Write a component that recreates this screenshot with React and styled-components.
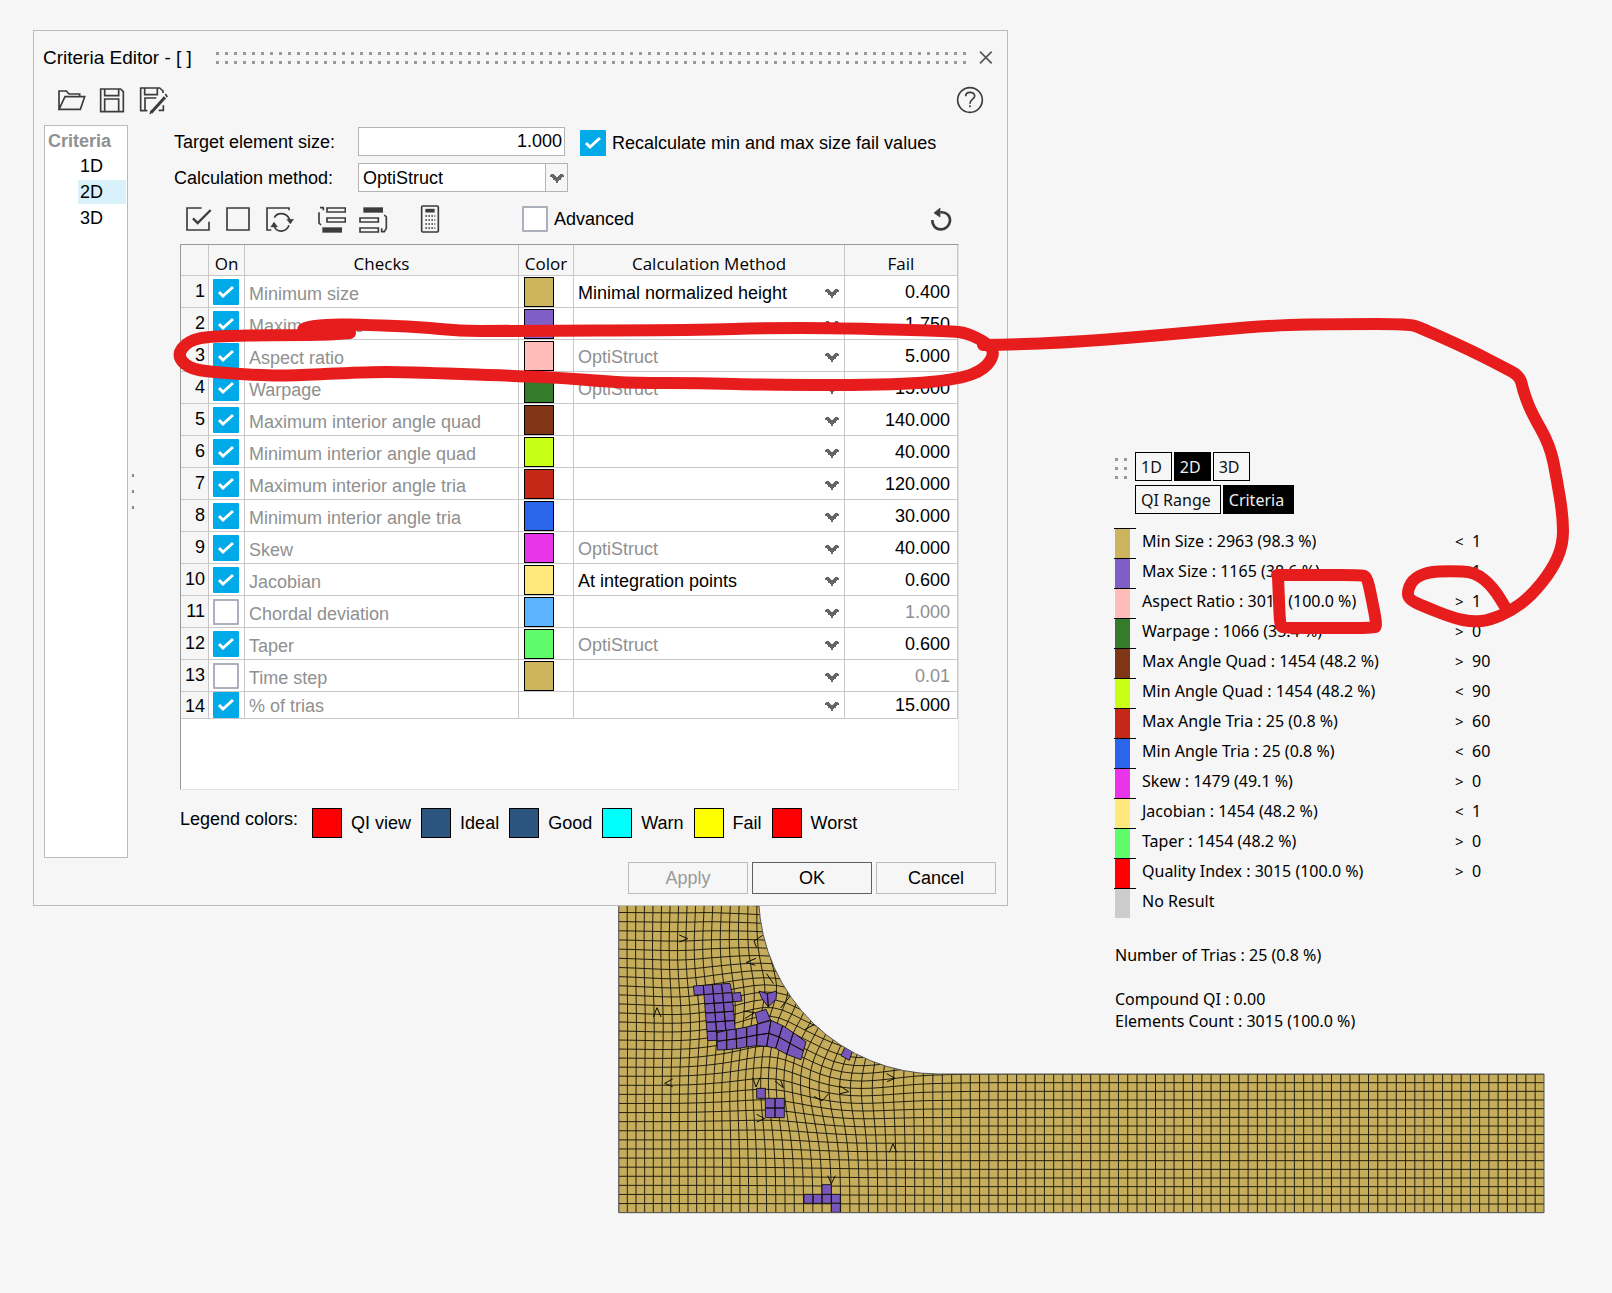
import React, { useState } from 'react';
import styled, { createGlobalStyle } from 'styled-components';

const checks = [
  { name: 'Minimum size', color: '#cdb55e', method: 'Minimal normalized height', fail: '0.400', on: true, editable: true },
  { name: 'Maximum size', color: '#7f5fc7', method: '', fail: '1.750', on: true },
  { name: 'Aspect ratio', color: '#ffbcb8', method: 'OptiStruct', fail: '5.000', on: true },
  { name: 'Warpage', color: '#347c2c', method: 'OptiStruct', fail: '15.000', on: true },
  { name: 'Maximum interior angle quad', color: '#803517', method: '', fail: '140.000', on: true },
  { name: 'Minimum interior angle quad', color: '#c8ff17', method: '', fail: '40.000', on: true },
  { name: 'Maximum interior angle tria', color: '#c62817', method: '', fail: '120.000', on: true },
  { name: 'Minimum interior angle tria', color: '#2b65ec', method: '', fail: '30.000', on: true },
  { name: 'Skew', color: '#e935e9', method: 'OptiStruct', fail: '40.000', on: true },
  { name: 'Jacobian', color: '#ffe87c', method: 'At integration points', fail: '0.600', on: true, editable: true },
  { name: 'Chordal deviation', color: '#5cb3ff', method: '', fail: '1.000', on: false },
  { name: 'Taper', color: '#5ffb6b', method: 'OptiStruct', fail: '0.600', on: true },
  { name: 'Time step', color: '#cdb55e', method: '', fail: '0.01', on: false },
  { name: '% of trias', color: null, method: '', fail: '15.000', on: true },
];

const legendColors = [
  ['QI view', '#ff0000'],
  ['Ideal', '#2b547e'],
  ['Good', '#2b547e'],
  ['Warn', '#00ffff'],
  ['Fail', '#ffff00'],
  ['Worst', '#ff0000'],
];

const results = [
  ['Min Size : 2963 (98.3 %)', '#cdb55e', '<', '1'],
  ['Max Size : 1165 (38.6 %)', '#7f5fc7', '>', '1'],
  ['Aspect Ratio : 3015 (100.0 %)', '#ffbcb8', '>', '1'],
  ['Warpage : 1066 (35.4 %)', '#347c2c', '>', '0'],
  ['Max Angle Quad : 1454 (48.2 %)', '#803517', '>', '90'],
  ['Min Angle Quad : 1454 (48.2 %)', '#c8ff17', '<', '90'],
  ['Max Angle Tria : 25 (0.8 %)', '#c62817', '>', '60'],
  ['Min Angle Tria : 25 (0.8 %)', '#2b65ec', '<', '60'],
  ['Skew : 1479 (49.1 %)', '#e935e9', '>', '0'],
  ['Jacobian : 1454 (48.2 %)', '#ffe87c', '<', '1'],
  ['Taper : 1454 (48.2 %)', '#5ffb6b', '>', '0'],
  ['Quality Index : 3015 (100.0 %)', '#ff0000', '>', '0'],
  ['No Result', '#cccccc', '', ''],
];

/* ---------- icons ---------- */

const Icon = ({ box, children }) => {
  const [, , w, h] = box.split(' ').map(Number);
  return (
    <svg width={w / 3} height={h / 3} viewBox={box} fill="none" stroke="#3c3c3c" strokeWidth="5" aria-hidden="true">
      {children}
    </svg>
  );
};

const OpenIcon = () => (
  <Icon box="81 186 90 78">
    <path d="M87 253V198h22l8 9h32v9M87 253l18-38h59l-13 38z" />
  </Icon>
);

const SaveIcon = () => (
  <Icon box="207 186 84 78">
    <path d="M212 192h60l8 8v60h-68zM224 192v20h42v-20M224 260v-38h42v38" />
  </Icon>
);

const SaveAsIcon = () => (
  <Icon box="327 186 90 87">
    <path d="M352 260h-20v-68h57l10 9v6M344 192v20h38v-20M345 260v-38h34" />
    <path d="M363 266l42-46" strokeWidth="9" />
    <path d="M360 270l6-12M406 210l6 9M400 244v15h-14" />
  </Icon>
);

const HelpIcon = () => (
  <Icon box="1308 180 84 84">
    <circle cx="1350" cy="222" r="37" />
    <path d="M1337 211c0-8 6-12 13-12s14 4 14 11c0 10-14 9-14 23" />
    <path d="M1350 238v6" />
  </Icon>
);

const CloseIcon = () => (
  <Icon box="1374 72 48 48">
    <path d="M1380 77l35 35M1415 77l-35 35" stroke="#555" strokeWidth="5" />
  </Icon>
);

const CheckAllIcon = () => (
  <Icon box="465 540 84 84">
    <path d="M515 549h-44v66h66v-25" />
    <path d="M489 580l14 14 39-39" strokeWidth="7" />
  </Icon>
);

const CheckNoneIcon = () => (
  <Icon box="585 540 84 84">
    <path d="M591 549h66v66h-66z" />
  </Icon>
);

const InvertIcon = () => (
  <Icon box="705 540 90 87">
    <path d="M724 615h-13v-66h66v7" />
    <path d="M733 578c8-16 36-18 46 6M777 601c-8 22-36 24-45 2" />
    <path d="M770 583h21l-10 14zM722 606l10-15 11 15z" fill="#3c3c3c" strokeWidth="1" />
  </Icon>
);

const MoveDownIcon = () => (
  <Icon box="861 540 87 87">
    <path d="M891 549h55v12h-55zM891 579h55v12h-55z" />
    <path d="M877 607h59v16h-59z" fill="#3c3c3c" stroke="none" />
    <path d="M882 548h-12M880 548v8M867 562v32l6 6" />
  </Icon>
);

const MoveUpIcon = () => (
  <Icon box="981 540 90 87">
    <path d="M997 547h59v16h-59z" fill="#3c3c3c" stroke="none" />
    <path d="M987 579h55v12h-55zM987 609h55v12h-55z" />
    <path d="M1060 570l6 6v34l-6 10h-9M1052 610v12" />
  </Icon>
);

const CalculatorIcon = () => (
  <Icon box="1167 537 60 90">
    <rect x="1172" y="543" width="50" height="78" rx="3" />
    <path d="M1183 557h28" strokeWidth="11" />
    <path d="M1183 573h30M1183 585h30M1183 597h30M1183 609h30" strokeWidth="4" strokeDasharray="5 4" />
  </Icon>
);

const ResetIcon = () => (
  <Icon box="1227 543 72 78">
    <path d="M1261 562c20-2 30 12 29 26-2 14-13 26-28 25-15 0-26-13-25-28" strokeWidth="8" />
    <path d="M1242 564l18-15v27z" fill="#3c3c3c" strokeWidth="2" />
  </Icon>
);

const Arrow = () => (
  <svg width="14" height="10" viewBox="0 0 14 10" aria-hidden="true">
    <path d="M1 1h3v1h1v1h1v1h2V3h1V2h1V1h3v1h1v2h-2v1h-1v2h-2v1H8v2H6V8H5V7H3V5H2V4H0V2h1z" fill="#666" />
  </svg>
);

const Check = ({ label, ...props }) => (
  <CheckWrap>
    <input type="checkbox" aria-label={label} {...props} />
    <svg width="26" height="26" viewBox="0 0 26 26" aria-hidden="true">
      <path d="M6 13l4 4 10-9" fill="none" stroke="#fff" strokeWidth="3" />
    </svg>
  </CheckWrap>
);

/* ---------- finite element mesh, three units to a pixel ---------- */

// rotates the grid round a point, less and less with the distance
const swirl = ([x, y], cx, cy, degrees, radius) => {
  const dx = x - cx;
  const dy = y - cy;
  const d = (dx * dx + dy * dy) / (radius * radius);
  const a = ((degrees * Math.PI) / 180) * Math.exp(-d);
  return [cx + dx * Math.cos(a) - dy * Math.sin(a), cy + dx * Math.sin(a) + dy * Math.cos(a)];
};

const meshPoint = (col, row) => {
  const x = col <= 16 ? 26 + col * 26 : 442 + (col - 16) * 27.78;
  const w = Math.min(1, Math.max(0, (1000 - x) / 700));
  const y = 935 - row * (26 + w * 1.3);
  let p = swirl([x, y], 620, 420, 27, 190);
  p = swirl(p, 320, 260, -7, 170);
  return swirl(p, 540, 320, 12, 100);
};

const linePath = (points) => 'M' + points.map((p) => p.map((n) => n.toFixed(1)).join(' ')).join('L');

const buildMesh = () => {
  const lines = [];
  for (let row = 0; row <= 36; row++) {
    const points = [];
    for (let col = 0; col <= 101; col++) points.push(meshPoint(col, row));
    lines.push(linePath(points));
  }
  for (let col = 0; col <= 101; col++) {
    const points = [];
    for (let row = 0; row <= 36; row++) points.push(meshPoint(col, row));
    lines.push(linePath(points));
  }
  return lines.join('');
};

const meshLines = buildMesh();
const meshOutline = 'M26 0H446A540 540 0 0 0 984 519H2802V935H26Z';

const trias =
  'M208 102l25 11-25 10M458 103l-26 17 8 20M438 172l-29 12 27 9M470 218l20 30M130 348l11-28 12 28M188 534l-24 13 24 10M428 530l10 28 12-28M495 540l25 20-8-22M440 640l24 13-24 10M653 824l11 24 12-24M838 754l11-26 11 26M830 518l25 14-24 10M690 555l26 17-26 6M612 586l24 14 20-22M542 283l-30 38M614 370l-30 16M400 330l34 5-30 18';

// strips of failed elements: corner points along the top and the bottom edge
const failed = [
  { top: [[250, 255], [280, 253], [307, 251], [334, 249], [360, 247]], bottom: [[253, 282], [282, 281], [310, 279], [338, 277], [366, 275]], rows: 1 },
  { top: [[282, 281], [310, 279], [338, 277], [366, 275]], bottom: [[293, 419], [322, 418], [350, 416], [378, 414]], rows: 5 },
  { top: [[366, 277], [391, 274]], bottom: [[370, 302], [396, 300]], rows: 1 },
  {
    top: [[321, 395], [350, 388], [378, 384], [410, 378], [441, 370], [483, 358], [518, 374], [550, 395], [588, 423]],
    bottom: [[322, 447], [350, 446], [380, 443], [410, 438], [440, 434], [470, 436], [497, 442], [530, 460], [573, 476]],
    rows: 2,
  },
  { top: [[447, 270], [472, 278], [500, 270]], bottom: [[455, 292], [475, 318], [498, 295]], rows: 1 },
  { top: [[436, 335], [468, 325]], bottom: [[443, 368], [482, 357]], rows: 1 },
  { top: [[705, 438], [727, 452]], bottom: [[693, 464], [718, 478]], rows: 1 },
  { top: [[440, 562], [466, 562]], bottom: [[440, 592], [466, 592]], rows: 1 },
  { top: [[466, 592], [495, 592], [523, 592]], bottom: [[466, 650], [495, 650], [523, 650]], rows: 2 },
  { top: [[582, 880], [609, 880], [636, 880], [664, 880], [691, 880]], bottom: [[582, 907], [609, 907], [636, 907], [664, 907], [691, 907]], rows: 1 },
  { top: [[636, 851], [664, 851]], bottom: [[636, 880], [664, 880]], rows: 1 },
  { top: [[664, 907], [691, 907]], bottom: [[664, 934], [691, 934]], rows: 1 },
];

const mix = (a, b, t) => [a[0] + (b[0] - a[0]) * t, a[1] + (b[1] - a[1]) * t];

const stripPath = ({ top, bottom, rows }) => {
  const cells = [];
  for (let i = 0; i < top.length - 1; i++) {
    for (let j = 0; j < rows; j++) {
      cells.push(
        linePath([
          mix(top[i], bottom[i], j / rows),
          mix(top[i + 1], bottom[i + 1], j / rows),
          mix(top[i + 1], bottom[i + 1], (j + 1) / rows),
          mix(top[i], bottom[i], (j + 1) / rows),
        ]) + 'Z'
      );
    }
  }
  return cells.join('');
};

const Mesh = () => (
  <MeshSvg viewBox="24 15 2781 924" role="img" aria-label="Mesh">
    <defs>
      <clipPath id="part">
        <path d={meshOutline} />
      </clipPath>
    </defs>
    <g clipPath="url(#part)" stroke="#0c0a04" strokeWidth="2.6">
      <path d={meshOutline} fill="#c5ad5b" stroke="none" />
      <path d={meshLines} fill="none" />
      <path d={trias} fill="none" strokeWidth="3" />
      {failed.map((strip, i) => (
        <path key={i} d={stripPath(strip)} fill="#7857bd" />
      ))}
    </g>
    <path d={meshOutline} fill="none" stroke="#555" strokeWidth="3" />
  </MeshSvg>
);

/* ---------- red pen ---------- */

const strokes = [
  [[350, 333], [330, 335], [287, 335], [210, 336], [188, 341], [177, 355], [188, 368], [210, 372], [270, 376], [303, 375], [370, 372], [403, 372], [520, 376], [563, 378], [600, 381], [633, 383], [700, 383], [770, 385], [900, 385], [960, 379], [985, 369], [995, 353], [987, 343], [967, 333], [950, 331], [833, 328], [767, 328], [700, 330], [500, 331], [460, 331], [420, 327], [370, 325], [327, 324], [303, 328], [303, 332], [348, 330]],
  [[983, 345], [1050, 344], [1164, 335], [1270, 325], [1344, 324], [1409, 324], [1421, 328], [1470, 350], [1503, 367], [1520, 376], [1523, 390], [1531, 412], [1550, 445], [1557, 480], [1563, 517], [1563, 545], [1552, 570], [1531, 596], [1511, 611], [1490, 620], [1473, 622], [1453, 618], [1423, 606], [1410, 600], [1407, 593], [1412, 580], [1427, 572], [1450, 571], [1475, 572], [1493, 587], [1507, 610]],
  [[1277, 575], [1320, 575], [1362, 575], [1367, 577], [1371, 595], [1377, 626], [1374, 628], [1330, 628], [1284, 628], [1280, 626], [1279, 600], [1278, 577]],
];

const penPath = (points) => {
  let d = `M${points[0]}`;
  for (let i = 1; i < points.length - 1; i++) {
    d += `Q${points[i]} ${mix(points[i], points[i + 1], 0.5)}`;
  }
  return `${d}L${points[points.length - 1]}`;
};

const PenMarks = () => (
  <PenSvg viewBox="0 0 1612 1293" aria-hidden="true">
    {strokes.map((points, i) => (
      <path key={i} d={penPath(points)} />
    ))}
  </PenSvg>
);

/* ---------- page ---------- */

const CriteriaTable = () => {
  const [rows, setRows] = useState(checks);

  const toggle = (index) => {
    setRows(rows.map((row, i) => (i === index ? { ...row, on: !row.on } : row)));
  };

  return (
    <TableBox>
      <Table>
        <colgroup>
          <col className="number" />
          <col className="on" />
          <col />
          <col className="color" />
          <col className="method" />
          <col className="fail" />
        </colgroup>
        <thead>
          <tr>
            <th aria-label="Row" />
            <th>On</th>
            <th>Checks</th>
            <th>Color</th>
            <th>Calculation Method</th>
            <th>Fail</th>
          </tr>
        </thead>
        <tbody>
          {rows.map((row, i) => (
            <Row key={row.name} $short={!row.color}>
              <td className="number">{i + 1}</td>
              <td className="on">
                <Check label={row.name} checked={row.on} onChange={() => toggle(i)} />
              </td>
              <td className="name">{row.name}</td>
              <td className="color">{row.color && <Swatch $color={row.color} />}</td>
              <td className="field">
                <CellSelect $muted={!row.editable}>
                  <select aria-label={`${row.name} method`} defaultValue={row.method}>
                    <option>{row.method}</option>
                  </select>
                  <Arrow />
                </CellSelect>
              </td>
              <td className="field">
                <FailInput aria-label={`${row.name} fail`} defaultValue={row.fail} $muted={!row.on} />
              </td>
            </Row>
          ))}
        </tbody>
      </Table>
    </TableBox>
  );
};

const CriteriaEditor = () => (
  <Dialog aria-labelledby="dialog-title">
    <TitleBar>
      <h1 id="dialog-title">Criteria Editor - [ ]</h1>
      <Grip>
        <i />
        <i />
      </Grip>
      <IconButton aria-label="Close"><CloseIcon /></IconButton>
    </TitleBar>

    <FileBar>
      <IconButton aria-label="Open"><OpenIcon /></IconButton>
      <IconButton aria-label="Save"><SaveIcon /></IconButton>
      <IconButton aria-label="Save as"><SaveAsIcon /></IconButton>
      <Spacer />
      <IconButton aria-label="Help"><HelpIcon /></IconButton>
    </FileBar>

    <Body>
      <Sidebar>
        <h2>Criteria</h2>
        <TreeItem>1D</TreeItem>
        <TreeItem $active>2D</TreeItem>
        <TreeItem>3D</TreeItem>
      </Sidebar>
      <Splitter>
        <i />
        <i />
        <i />
      </Splitter>
      <Main>
        <Form>
          <label htmlFor="size">Target element size:</label>
          <SizeInput id="size" defaultValue="1.000" />
          <CheckLabel>
            <Check defaultChecked />
            Recalculate min and max size fail values
          </CheckLabel>
          <label htmlFor="method">Calculation method:</label>
          <MethodSelect>
            <select id="method" defaultValue="OptiStruct">
              <option>OptiStruct</option>
            </select>
            <span><Arrow /></span>
          </MethodSelect>
        </Form>

        <CheckBar>
          <IconGroup>
            <IconButton aria-label="Check all"><CheckAllIcon /></IconButton>
            <IconButton aria-label="Check none"><CheckNoneIcon /></IconButton>
            <IconButton aria-label="Invert"><InvertIcon /></IconButton>
          </IconGroup>
          <IconGroup>
            <IconButton aria-label="Sort down"><MoveDownIcon /></IconButton>
            <IconButton aria-label="Sort up"><MoveUpIcon /></IconButton>
          </IconGroup>
          <CalculateButton aria-label="Calculate"><CalculatorIcon /></CalculateButton>
          <Advanced>
            <Check />
            Advanced
          </Advanced>
          <Spacer />
          <IconButton aria-label="Reset"><ResetIcon /></IconButton>
        </CheckBar>

        <CriteriaTable />

        <ColorBar>
          <span className="title">Legend colors:</span>
          {legendColors.map(([name, color]) => (
            <ColorItem key={name}>
              <Swatch $color={color} />
              {name}
            </ColorItem>
          ))}
        </ColorBar>
      </Main>
    </Body>

    <Footer>
      <FooterButton disabled>Apply</FooterButton>
      <FooterButton $primary>OK</FooterButton>
      <FooterButton>Cancel</FooterButton>
    </Footer>
  </Dialog>
);

const QualityLegend = () => (
  <Legend>
    <ModeBar>
      <Handle>
        {[0, 1, 2, 3, 4, 5].map((n) => (
          <i key={n} />
        ))}
      </Handle>
      <div>
        <ModeRow>
          <ModeButton>1D</ModeButton>
          <ModeButton $active>2D</ModeButton>
          <ModeButton>3D</ModeButton>
        </ModeRow>
        <ModeRow>
          <ModeButton>QI Range</ModeButton>
          <ModeButton $active>Criteria</ModeButton>
        </ModeRow>
      </div>
    </ModeBar>
    <ResultList>
      {results.map(([text, color, sign, limit]) => (
        <Result key={text} $color={color}>
          <i />
          <span>{text}</span>
          <small>{sign}</small>
          <span>{limit}</span>
        </Result>
      ))}
    </ResultList>
    <Note>Number of Trias : 25 (0.8 %)</Note>
    <Note>
      Compound QI : 0.00
      <br />
      Elements Count : 3015 (100.0 %)
    </Note>
  </Legend>
);

export default function App() {
  return (
    <Page>
      <GlobalStyle />
      <CriteriaEditor />
      <QualityLegend />
      <Mesh />
      <PenMarks />
    </Page>
  );
}

const GlobalStyle = createGlobalStyle`
  * {
    box-sizing: border-box;
  }

  body {
    margin: 0;
    background: #f6f6f6;
    color: #000;
    font: 18px/22px "Liberation Sans", Arial, sans-serif;
  }

  h1, h2, p, ul {
    margin: 0;
    padding: 0;
  }

  button, input, select {
    font: inherit;
    color: inherit;
    margin: 0;
  }
`;

const Page = styled.div`
  position: relative;
  display: grid;
  grid-template-columns: minmax(0, 975fr) minmax(0, 580fr);
  grid-template-rows: auto auto;
  align-content: start;
  min-height: 100vh;
  padding: 30px 24px 0 33px;
`;

const Dialog = styled.section`
  grid-area: 1 / 1;
  display: flex;
  flex-direction: column;
  border: 1px solid #bbb;
  background: #f6f6f6;
`;

const TitleBar = styled.header`
  display: flex;
  align-items: center;
  height: 54px;
  padding: 0 13px 0 9px;

  h1 {
    font-size: 19px;
    font-weight: 400;
    margin-right: 24px;
  }
`;

const Grip = styled.div`
  flex: 1;
  display: grid;
  gap: 6px;
  margin-right: 10px;

  i {
    height: 3px;
    background: repeating-linear-gradient(90deg, #999 0 3px, transparent 3px 9px);
  }
`;

const IconButton = styled.button`
  display: flex;
  align-items: center;
  justify-content: center;
  padding: 0;
  border: 0;
  background: none;
`;

const CalculateButton = styled(IconButton)`
  margin-left: 10px;
`;

const Spacer = styled.div`
  flex: 1;
`;

const FileBar = styled.div`
  display: flex;
  align-items: center;
  gap: 12px;
  height: 30px;
  margin-bottom: 10px;
  padding: 0 23px;
`;

const Body = styled.div`
  display: grid;
  grid-template-columns: 84px 10px minmax(0, 1fr);
  padding-left: 10px;
`;

const Sidebar = styled.nav`
  display: flex;
  flex-direction: column;
  align-items: stretch;
  gap: 2px;
  border: 1px solid #bbb;
  background: #fff;
  padding: 4px 1px 0 3px;

  h2 {
    font-size: 18px;
    line-height: 22px;
    color: #909090;
  }
`;

const TreeItem = styled.button`
  height: 24px;
  margin-left: 30px;
  padding: 0 2px;
  border: 0;
  text-align: left;
  background: ${(p) => (p.$active ? '#d8f1fb' : 'none')};
`;

const Splitter = styled.div`
  display: flex;
  flex-direction: column;
  align-items: center;
  justify-content: center;
  gap: 13px;

  i {
    width: 2px;
    height: 3px;
    background: #888;
  }
`;

const Main = styled.main`
  padding: 2px 48px 20px 36px;
`;

const Form = styled.div`
  display: grid;
  grid-template-columns: 184px 210px 1fr;
  align-items: center;
  row-gap: 7px;
`;

const SizeInput = styled.input`
  width: 207px;
  height: 29px;
  padding: 0 2px;
  border: 1px solid #b4b4b4;
  background: #fff;
  text-align: right;
`;

const MethodSelect = styled.div`
  display: grid;
  grid-template-columns: 1fr 22px;
  height: 29px;
  border: 1px solid #b4b4b4;

  select {
    grid-area: 1 / 1 / 2 / 3;
    appearance: none;
    border: 0;
    padding: 0 4px;
    background: #fff;
  }

  span {
    grid-area: 1 / 2;
    display: flex;
    align-items: center;
    justify-content: center;
    border-left: 1px solid #b4b4b4;
    background: #f6f6f6;
    pointer-events: none;
  }
`;

const CheckWrap = styled.span`
  display: inline-grid;
  flex: none;

  input {
    grid-area: 1 / 1;
    appearance: none;
    width: 26px;
    height: 26px;
    border: 2px solid #abb0bc;
    border-radius: 1px;
    background: #fff;
  }

  input:checked {
    border: 0;
    background: #00a9e8;
  }

  svg {
    grid-area: 1 / 1;
    visibility: hidden;
    pointer-events: none;
  }

  input:checked + svg {
    visibility: visible;
  }
`;

const CheckLabel = styled.label`
  display: flex;
  align-items: center;
  gap: 6px;
  padding: 3px 0 0 12px;
  white-space: nowrap;
`;

const CheckBar = styled.div`
  display: flex;
  align-items: center;
  gap: 22px;
  height: 34px;
  margin: 10px 0 8px;
  padding: 0 6px 0 11px;
`;

const IconGroup = styled.div`
  display: flex;
  align-items: center;
  gap: 12px;
`;

const Advanced = styled(CheckLabel)`
  padding: 0 0 0 60px;
`;

const TableBox = styled.div`
  min-height: 546px;
  margin: 0 0 18px 6px;
  border: 1px solid #e2e2e2;
  border-top-color: #999;
  border-left-color: #999;
  background: #fff;
`;

const Table = styled.table`
  width: 100%;
  table-layout: fixed;
  border-collapse: separate;
  border-spacing: 0;

  col.number { width: 28px; }
  col.on { width: 36px; }
  col.color { width: 55px; }
  col.method { width: 271px; }
  col.fail { width: 113px; }

  th {
    height: 31px;
    padding: 8px 0 0;
    border-right: 1px solid #c8c8c8;
    border-bottom: 1px solid #c8c8c8;
    background: #f6f6f6;
    font: 17px/22px "Open Sans", "Noto Sans", sans-serif;
  }

  td {
    height: 32px;
    padding: 0;
    border-right: 1px solid #c8c8c8;
    border-bottom: 1px solid #c8c8c8;
    vertical-align: middle;
  }

  td.number {
    padding: 0 3px 2px 0;
    background: #f6f6f6;
    text-align: right;
  }

  td.on {
    line-height: 0;
    padding-left: 4px;
  }

  td.name {
    padding: 4px 0 0 4px;
    color: #909090;
  }

  td.color {
    padding: 1px 0 0 5px;
  }

  td.field {
    padding-top: 2px;
  }
`;

const Row = styled.tr`
  && td {
    height: ${(p) => (p.$short ? '26px' : '32px')};
  }

  && td.name,
  && td.number {
    ${(p) => p.$short && 'padding-top: 2px; padding-bottom: 0;'}
  }

  && td.field {
    ${(p) => p.$short && 'padding-top: 1px;'}
  }
`;

const Swatch = styled.span`
  display: block;
  flex: none;
  width: 30px;
  height: 30px;
  border: 1px solid #000;
  background: ${(p) => p.$color};
`;

const CellSelect = styled.div`
  display: grid;
  grid-template-columns: 1fr 19px;
  align-items: center;

  select {
    grid-area: 1 / 1 / 2 / 3;
    appearance: none;
    height: 24px;
    padding: 0 4px;
    border: 0;
    background: none;
    color: ${(p) => (p.$muted ? '#909090' : '#000')};
  }

  svg {
    grid-area: 1 / 2;
    pointer-events: none;
  }
`;

const FailInput = styled.input`
  display: block;
  width: 100%;
  height: 24px;
  padding: 0 7px 0 0;
  border: 0;
  background: none;
  text-align: right;
  color: ${(p) => (p.$muted ? '#909090' : '#000')};
`;

const ColorBar = styled.div`
  display: flex;
  align-items: center;
  gap: 10px;
  padding-left: 6px;

  .title {
    align-self: flex-start;
    margin-right: 4px;
  }
`;

const ColorItem = styled.span`
  display: flex;
  align-items: center;
  gap: 9px;
`;

const Footer = styled.footer`
  display: flex;
  justify-content: flex-end;
  gap: 4px;
  padding: 4px 11px 11px;
`;

const FooterButton = styled.button`
  width: 120px;
  height: 32px;
  border: 1px solid ${(p) => (p.$primary ? '#606060' : '#bbb')};
  background: none;

  &:disabled {
    color: #999;
  }
`;

const Legend = styled.aside`
  grid-area: 1 / 2 / 3 / 3;
  z-index: 1;
  align-self: start;
  padding: 422px 0 0 106px;
  font: 16px/22px "Noto Sans", sans-serif;
`;

const ModeBar = styled.div`
  display: flex;
  margin-bottom: 10px;
`;

const Handle = styled.div`
  display: grid;
  grid-template-columns: 3px 3px;
  gap: 6px;
  align-content: start;
  padding: 6px 8px 0 1px;

  i {
    height: 3px;
    background: #999;
  }
`;

const ModeRow = styled.div`
  display: flex;
  gap: 2px;
  margin-bottom: 4px;
`;

const ModeButton = styled.button`
  height: 29px;
  padding: 0 9px 0 5px;
  border: 1px solid #000;
  background: ${(p) => (p.$active ? '#000' : 'none')};
  color: ${(p) => (p.$active ? '#eee' : '#111')};
`;

const ResultList = styled.ul`
  list-style: none;
  margin-bottom: 26px;
`;

const Result = styled.li`
  display: grid;
  grid-template-columns: 22px 319px 17px 1fr;
  height: 30px;

  i {
    border-top: 1px solid #000;
    background: linear-gradient(${(p) => p.$color}, ${(p) => p.$color}) 1px 0 / 15px 100% no-repeat;
  }

  &:last-child i {
    border-top-color: #000;
  }

  span {
    padding-top: 2px;
  }

  span:nth-child(2) {
    padding-left: 6px;
  }

  small {
    padding-top: 2px;
    font-size: 15px;
  }
`;

const Note = styled.p`
  padding-left: 1px;
  margin-bottom: 22px;
`;

const MeshSvg = styled.svg`
  grid-area: 2 / 1 / 3 / 3;
  display: block;
  width: calc(100% - 628px);
  margin-left: 585px;
`;

const PenSvg = styled.svg`
  position: absolute;
  top: 0;
  left: 0;
  z-index: 2;
  width: 100%;
  pointer-events: none;
  fill: none;
  stroke: #e71c1c;
  stroke-width: 12px;
  stroke-linecap: round;
  stroke-linejoin: round;
`;
